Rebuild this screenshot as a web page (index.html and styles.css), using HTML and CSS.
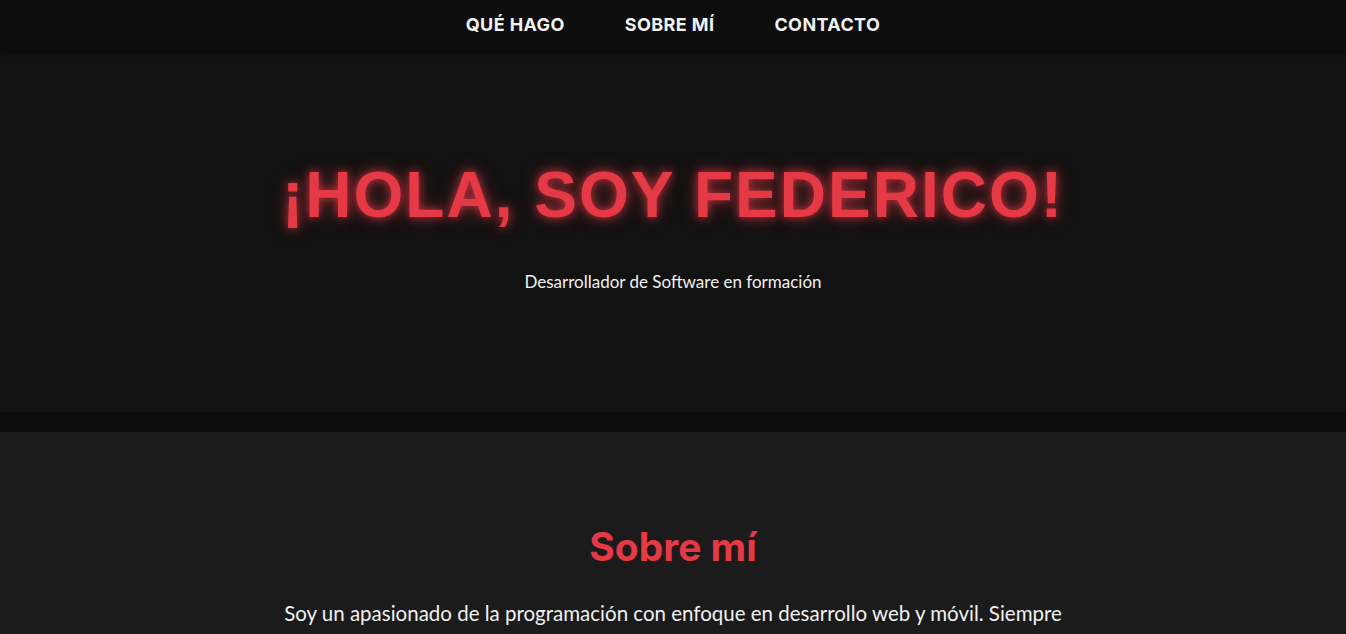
FILE: index.html
```html
<!DOCTYPE html>
<html lang="es">
<head>
<meta charset="utf-8">
<title>Federico</title>
<link rel="stylesheet" href="styles.css">
</head>
<body>
<nav class="nav">
  <a href="#" class="nav-link">Qué hago</a>
  <a href="#" class="nav-link">Sobre mí</a>
  <a href="#" class="nav-link">Contacto</a>
</nav>
<header class="hero">
  <h1 class="hero-title">¡HOLA, SOY FEDERICO!</h1>
  <p class="hero-sub">Desarrollador de Software en formación</p>
</header>
<div class="divider"></div>
<section class="about">
  <h2 class="about-title">Sobre mí</h2>
  <p class="about-text">Soy un apasionado de la programación con enfoque en desarrollo web y móvil. Siempre buscando aprender nuevas tecnologías y mejorar mis habilidades.</p>
</section>
</body>
</html>
```
FILE: styles.css
```css
* { box-sizing: border-box; }
body {
  margin: 0;
  background: #1b1b1b;
  color: #fff;
  font-family: "Lato", "Open Sans", sans-serif;
}
.nav {
  height: 50px;
  background: #0e0e0e;
  display: flex;
  justify-content: center;
  align-items: center;
  gap: 60px;
  box-shadow: 0 2px 8px rgba(0,0,0,0.5);
  position: relative;
  z-index: 2;
  padding-bottom: 2px;
}
.nav-link {
  color: #f2f2f2;
  text-decoration: none;
  text-transform: uppercase;
  font-family: "Inter", sans-serif;
  font-weight: 700;
  font-size: 18px;
  letter-spacing: 0.4px;
}
.hero {
  background: #121212;
  height: 362px;
  display: flex;
  flex-direction: column;
  align-items: center;
  padding-top: 110px;
}
.hero-title {
  margin: 0;
  font-family: "Liberation Sans", Arial, sans-serif;
  font-weight: 700;
  font-size: 64px;
  line-height: 70px;
  letter-spacing: 2px;
  color: #e63946;
  text-shadow: 0 0 10px rgba(230,57,70,0.8), 0 0 20px rgba(230,57,70,0.4);
}
.hero-sub {
  margin: 41px 0 0;
  font-size: 17px;
  color: #f0f0f0;
}
.divider {
  height: 20px;
  background: #0e0e0e;
}
.about {
  text-align: center;
  padding: 92px 0 40px;
}
.about-title {
  margin: 0;
  font-family: "Inter", sans-serif;
  font-weight: 700;
  font-size: 39px;
  line-height: 46px;
  color: #e63946;
}
.about-text {
  margin: 28px auto 0;
  max-width: 820px;
  font-size: 20.5px;
  line-height: 30px;
  color: #f0f0f0;
}
```
